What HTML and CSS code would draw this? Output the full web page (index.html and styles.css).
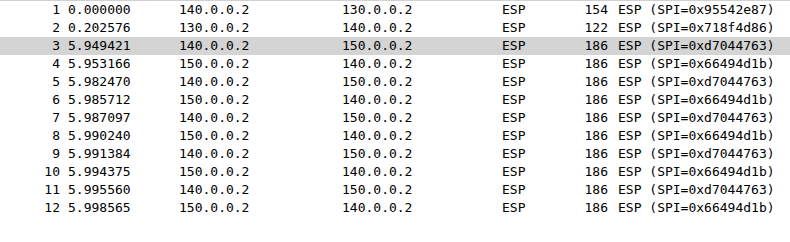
FILE: index.html
```html
<!DOCTYPE html>
<html>
<head>
<meta charset="utf-8">
<link rel="stylesheet" href="styles.css">
</head>
<body>
<div class="list">
  <div class="row"><span class="no">1</span><span class="time">0.000000</span><span class="src">140.0.0.2</span><span class="dst">130.0.0.2</span><span class="proto">ESP</span><span class="len">154</span><span class="info">ESP (SPI=0x95542e87)</span></div>
  <div class="row"><span class="no">2</span><span class="time">0.202576</span><span class="src">130.0.0.2</span><span class="dst">140.0.0.2</span><span class="proto">ESP</span><span class="len">122</span><span class="info">ESP (SPI=0x718f4d86)</span></div>
  <div class="row sel"><span class="no">3</span><span class="time">5.949421</span><span class="src">140.0.0.2</span><span class="dst">150.0.0.2</span><span class="proto">ESP</span><span class="len">186</span><span class="info">ESP (SPI=0xd7044763)</span></div>
  <div class="row"><span class="no">4</span><span class="time">5.953166</span><span class="src">150.0.0.2</span><span class="dst">140.0.0.2</span><span class="proto">ESP</span><span class="len">186</span><span class="info">ESP (SPI=0x66494d1b)</span></div>
  <div class="row"><span class="no">5</span><span class="time">5.982470</span><span class="src">140.0.0.2</span><span class="dst">150.0.0.2</span><span class="proto">ESP</span><span class="len">186</span><span class="info">ESP (SPI=0xd7044763)</span></div>
  <div class="row"><span class="no">6</span><span class="time">5.985712</span><span class="src">150.0.0.2</span><span class="dst">140.0.0.2</span><span class="proto">ESP</span><span class="len">186</span><span class="info">ESP (SPI=0x66494d1b)</span></div>
  <div class="row"><span class="no">7</span><span class="time">5.987097</span><span class="src">140.0.0.2</span><span class="dst">150.0.0.2</span><span class="proto">ESP</span><span class="len">186</span><span class="info">ESP (SPI=0xd7044763)</span></div>
  <div class="row"><span class="no">8</span><span class="time">5.990240</span><span class="src">150.0.0.2</span><span class="dst">140.0.0.2</span><span class="proto">ESP</span><span class="len">186</span><span class="info">ESP (SPI=0x66494d1b)</span></div>
  <div class="row"><span class="no">9</span><span class="time">5.991384</span><span class="src">140.0.0.2</span><span class="dst">150.0.0.2</span><span class="proto">ESP</span><span class="len">186</span><span class="info">ESP (SPI=0xd7044763)</span></div>
  <div class="row"><span class="no">10</span><span class="time">5.994375</span><span class="src">150.0.0.2</span><span class="dst">140.0.0.2</span><span class="proto">ESP</span><span class="len">186</span><span class="info">ESP (SPI=0x66494d1b)</span></div>
  <div class="row"><span class="no">11</span><span class="time">5.995560</span><span class="src">140.0.0.2</span><span class="dst">150.0.0.2</span><span class="proto">ESP</span><span class="len">186</span><span class="info">ESP (SPI=0xd7044763)</span></div>
  <div class="row"><span class="no">12</span><span class="time">5.998565</span><span class="src">150.0.0.2</span><span class="dst">140.0.0.2</span><span class="proto">ESP</span><span class="len">186</span><span class="info">ESP (SPI=0x66494d1b)</span></div>
</div>
</body>
</html>
```
FILE: styles.css
```css
html, body {
  margin: 0;
  padding: 0;
  background: #ffffff;
}
.list {
  border-top: 1px solid #d0d0d0;
  font-family: "DejaVu Sans Mono", monospace;
  font-size: 13px;
  color: #000;
}
.row {
  display: grid;
  grid-template-columns: 60px 119px 163px 160px 60px 46px 1fr;
  height: 18px;
  line-height: 18px;
  white-space: pre;
}
.row.sel {
  background: #d4d4d4;
}
.no {
  text-align: right;
}
.time {
  padding-left: 8px;
}
.len {
  text-align: right;
}
.info {
  padding-left: 10px;
}
```
